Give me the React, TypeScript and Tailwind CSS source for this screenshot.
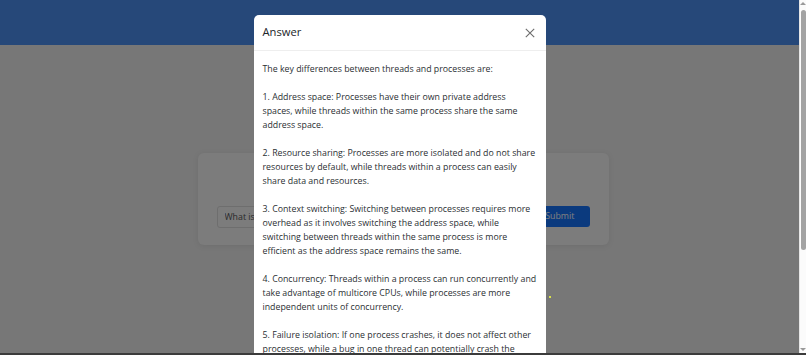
const answer = `The key differences between threads and processes are:

1. Address space: Processes have their own private address spaces, while threads within the same process share the same address space.

2. Resource sharing: Processes are more isolated and do not share resources by default, while threads within a process can easily share data and resources.

3. Context switching: Switching between processes requires more overhead as it involves switching the address space, while switching between threads within the same process is more efficient as the address space remains the same.

4. Concurrency: Threads within a process can run concurrently and take advantage of multicore CPUs, while processes are more independent units of concurrency.

5. Failure isolation: If one process crashes, it does not affect other processes, while a bug in one thread can potentially crash the entire process.`

const CloseIcon = () => (
  <svg width="10" height="10" viewBox="0 0 10 10" fill="none" stroke="#6c6c6c" strokeWidth="1.1">
    <path d="M0.8 0.8 L9.2 9.2 M9.2 0.8 L0.8 9.2" />
  </svg>
)

const Scrollbar = () => (
  <div className="flex h-full w-[7px] flex-col items-center border-l border-[#e6e6e6] bg-[#fbfbfb]">
    <div className="mt-[2px] h-0 w-0 border-x-[3px] border-b-[3px] border-x-transparent border-b-[#9a9a9a]" />
    <div className="mt-[5px] h-[240px] w-[5px] rounded-[3px] bg-[#a3a3a3]" />
    <div className="flex-1" />
    <div className="mb-[4px] h-0 w-0 border-x-[3px] border-t-[3px] border-x-transparent border-t-[#9a9a9a]" />
  </div>
)

export default function App() {
  return (
    <div className="relative h-[355px] w-full overflow-hidden bg-[#eeeeee] font-['Open_Sans','Noto_Sans',sans-serif] text-[#212529]">
      <header className="h-[45px] bg-[#4c90f2]" />
      <main className="flex justify-center pt-[108px]">
        <div className="w-[411px] rounded-[6px] bg-[#f8f8f8] px-[19px] pb-[17px] pt-[53px] shadow-[0_1px_6px_rgba(0,0,0,0.08)]">
          <form className="flex gap-[8px]">
            <input
              className="h-[22px] w-[300px] rounded-[3px] border border-[#dcdcdc] bg-[#f9f9f9] px-[7px] text-[8.8px] text-[#555] outline-none"
              defaultValue="What is a thread?"
            />
            <div className="flex-1" />
            <button type="button" className="h-[21px] w-[60px] rounded-[3px] bg-[#1674fd] text-[8.8px] text-white">
              Submit
            </button>
          </form>
        </div>
      </main>

      <div className="absolute inset-0 bg-black/50" />

      <div className="absolute inset-0 flex">
        <div className="flex flex-1 justify-center">
          <div className="mt-[15px] flex h-fit w-[292px] flex-col rounded-[5px] bg-white">
            <div className="flex h-[36px] items-center justify-between border-b border-[#eeeeee] px-[9px]">
              <h5 className="text-[11.2px] font-medium text-[#212529]">Answer</h5>
              <button type="button" className="mr-[1px] flex h-[12px] w-[12px] items-center justify-center">
                <CloseIcon />
              </button>
            </div>
            <div className="whitespace-pre-wrap p-[9px] pt-[11px] text-[8.8px] leading-[14px] text-[#2b2f33]">
              {answer}
            </div>
          </div>
        </div>
        <Scrollbar />
      </div>

      <div className="absolute left-[549px] top-[296px] h-[2px] w-[2px] bg-[#d9e24a]" />
      <div className="absolute bottom-0 left-0 h-[2px] w-full bg-[#3b3b3b]" />
    </div>
  )
}
